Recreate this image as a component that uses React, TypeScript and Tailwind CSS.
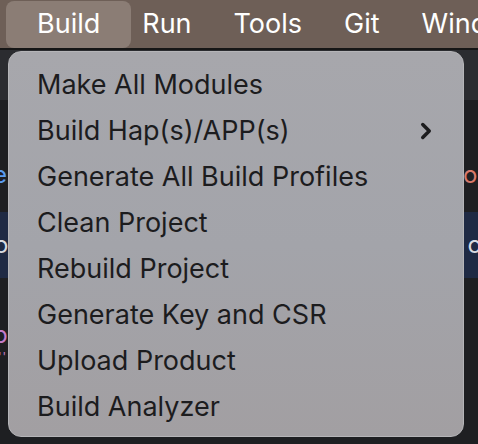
import { ChevronRight } from "lucide-react";

const items = [
  { label: "Make All Modules" },
  { label: "Build Hap(s)/APP(s)", sub: true },
  { label: "Generate All Build Profiles" },
  { label: "Clean Project" },
  { label: "Rebuild Project" },
  { label: "Generate Key and CSR" },
  { label: "Upload Product" },
  { label: "Build Analyzer" },
];

export default function App() {
  return (
    <div className="relative w-[478px] h-[444px] overflow-hidden bg-[#1e1f22] font-['Inter','Noto_Sans',sans-serif]">
      {/* menu bar */}
      <div className="flex items-center h-[48px] bg-[#6e5f57] px-[6px] text-white text-[27px] whitespace-nowrap">
        <div className="h-[47px] flex items-center px-[31px] rounded-[8px] bg-[#8b7d75]">Build</div>
        <div className="h-[47px] flex items-center ml-[-10px] px-[21px]">Run</div>
        <div className="h-[47px] flex items-center px-[21px]">Tools</div>
        <div className="h-[47px] flex items-center px-[21px]">Git</div>
        <div className="h-[47px] flex items-center px-[21px]">Window</div>
      </div>
      <div className="h-[2px] bg-[#161616]" />

      {/* ide behind */}
      <div className="h-[50px] bg-[#2b2c30]" />
      <div className="h-[112px] flex items-end justify-between pb-[25px] text-[24px] leading-none">
        <span className="ml-[-7px] text-[#5a9cf0]">e</span>
        <span className="mr-[-14px] text-[#d9796a]">og</span>
      </div>
      <div className="h-[66px] bg-[#1f2a44] flex items-center justify-between text-[24px] text-[#d8dae0] leading-none">
        <span className="ml-[-6px]">o</span>
        <span className="mr-[-4px]">o</span>
      </div>
      <div className="flex flex-col items-start pt-[45px] text-[24px] text-[#c27cc9] leading-none">
        <span className="ml-[-7px]">p</span>
        <span className="ml-[-2px] mt-[4px] text-[12px] tracking-[1px]">''</span>
      </div>

      {/* dropdown */}
      <div className="absolute left-[8px] top-[51px] w-[456px] h-[386px] rounded-[13px] bg-gradient-to-b from-[#a7a7ac] via-[#a3a4aa] to-[#a29fa2] border border-[#b5b5b8] pt-[10px]">
        {items.map((it) => (
          <div
            key={it.label}
            className="h-[46px] flex items-center justify-between pl-[28px] pr-[24px] text-[27px] text-[#1c1c1e]"
          >
            <span>{it.label}</span>
            {it.sub && <ChevronRight className="w-[26px] h-[26px] text-[#1c1c1e]" strokeWidth={3.2} />}
          </div>
        ))}
      </div>
    </div>
  );
}
